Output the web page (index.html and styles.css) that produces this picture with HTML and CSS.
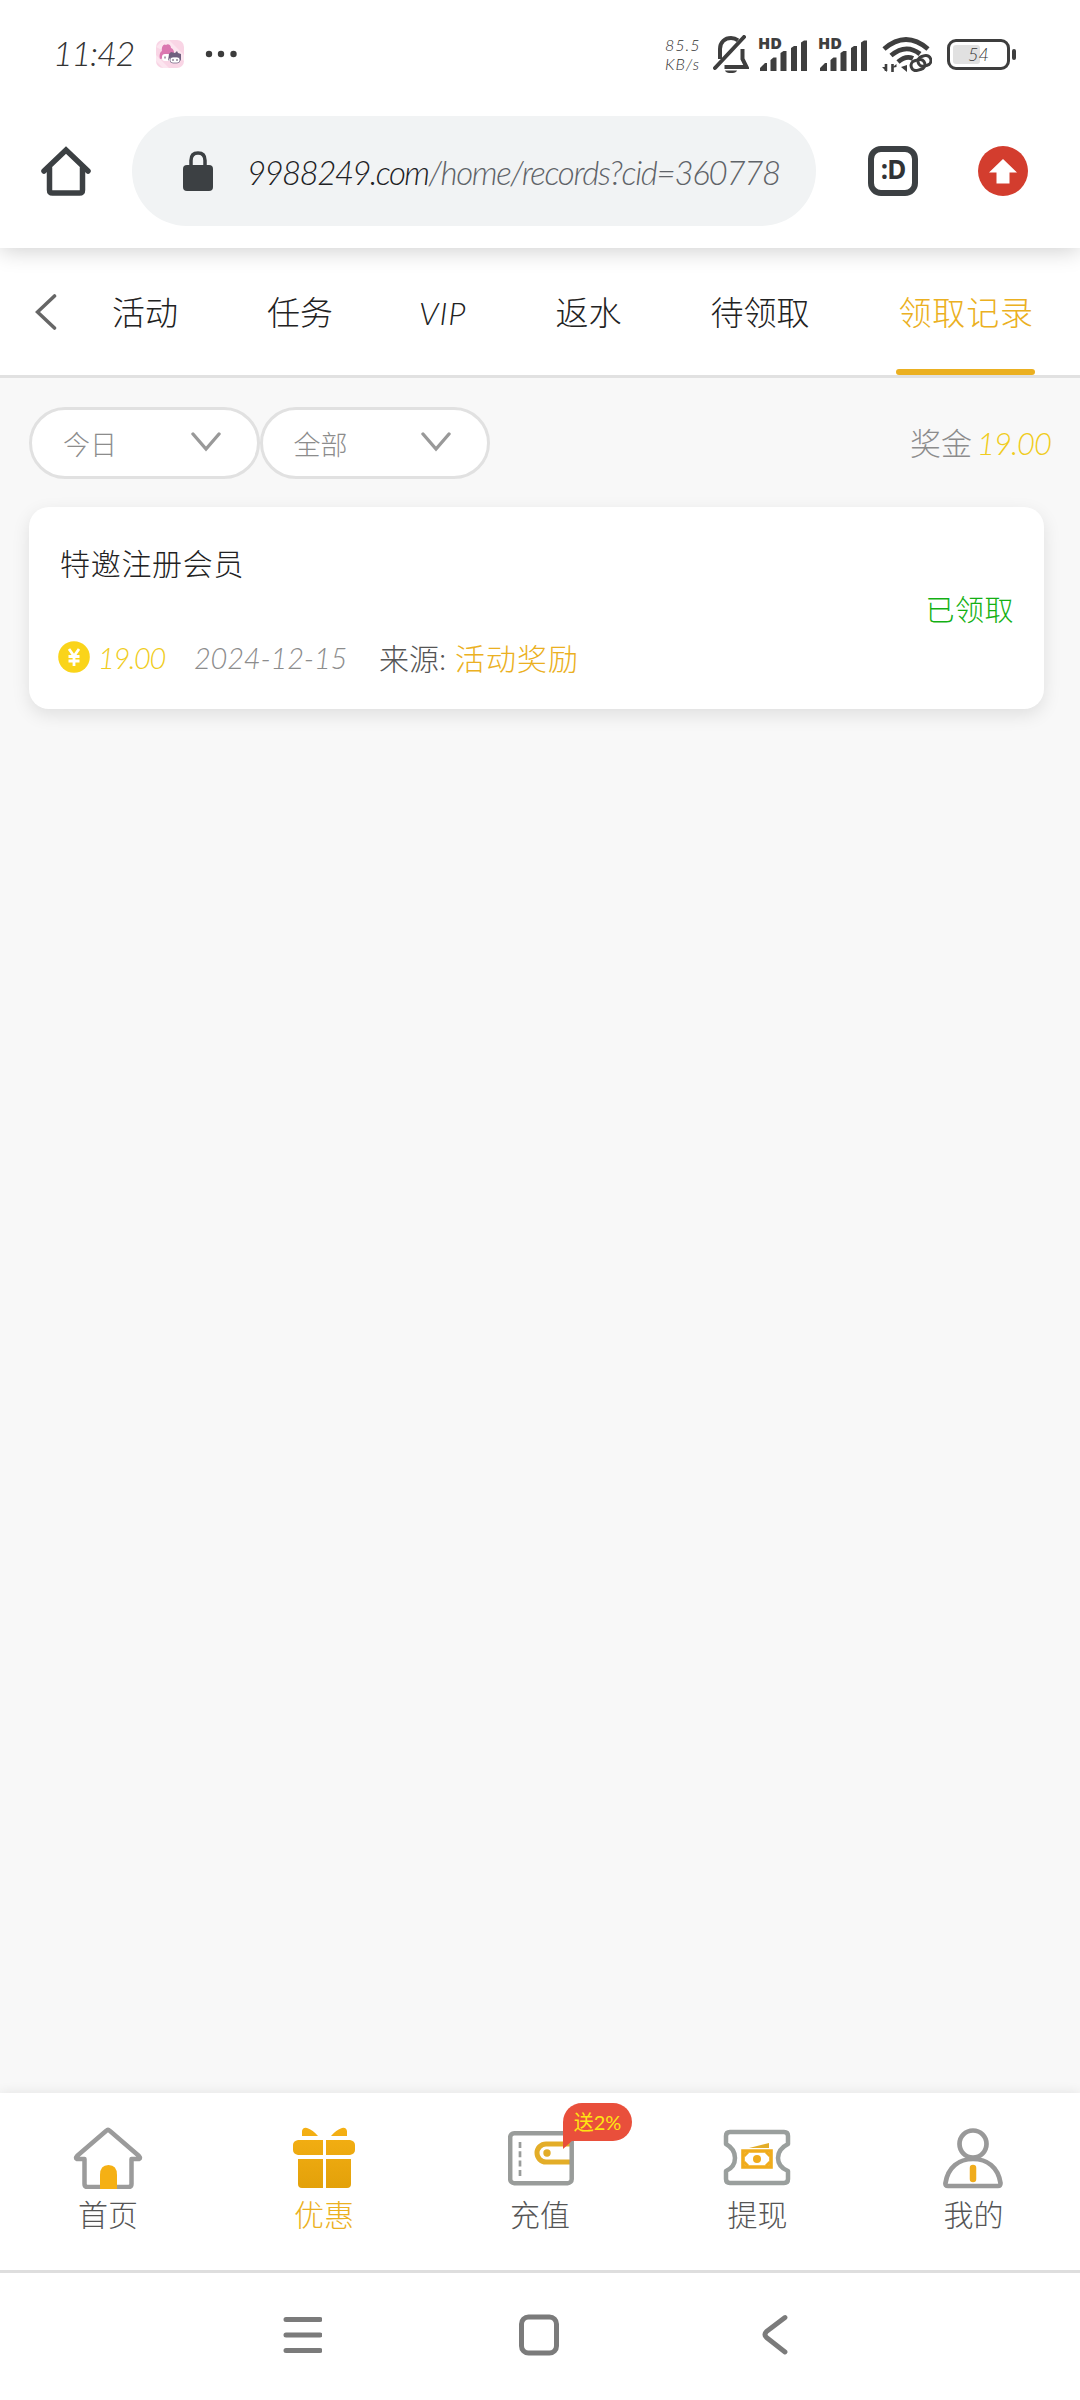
FILE: index.html
```html
<!DOCTYPE html>
<html lang="zh-CN">
<head>
<meta charset="utf-8">
<title>领取记录</title>
<link rel="stylesheet" href="styles.css">
</head>
<body>
<div class="screen">
  <header class="browser">
    <div class="status">
      <span class="time">11:42</span>
      <svg class="app-icon" width="28" height="28" viewBox="0 0 28 28">
        <rect width="28" height="28" rx="7" fill="#f9d5e5"/>
        <path d="M0 7 7 0h6L28 15v6zM0 15l13 13H7L0 21z" fill="#fce5ef"/>
        <path d="M6 11C5 7 8 3 10 5c2-2 5 0 5 3 3 1 4 5 2 8L4 19c-1-4 0-7 2-8z" fill="#db77b0"/>
        <rect x="6" y="14" width="9" height="7" rx="3" fill="#fff"/>
        <path d="M13 14l2-2 4 1 2-2 1 2 3 1v7l-2-3H14l-2 3z" fill="#70607f"/>
        <rect x="14" y="17" width="10" height="6" rx="3" fill="#fff" stroke="#70607f" stroke-width=".7"/>
        <path d="M9 16.500v2M17 19v2M21 19v2" stroke="#5a4a66"/>
      </svg>
      <svg class="more" width="32" height="8" viewBox="0 0 32 8" fill="#3c3c3c"><circle cx="4" cy="4" r="3.200"/><circle cx="16" cy="4" r="3.200"/><circle cx="28.500" cy="4" r="3.200"/></svg>
      <span class="speed"><span>85.5</span><span>KB/s</span></span>
      <svg class="bell" width="36" height="38" viewBox="0 0 36 38" fill="none" stroke="#3e3e3e" stroke-width="4">
        <path d="M7 24V14C7 7 12 3 18 3c3 0 5 .8 7 2.300M29.500 14v10l4 8H11.500"/>
        <path d="M2 33 31 2" stroke-linecap="round"/><path d="M12 35.500h12c-1 3.500-11 3.500-12 0z" fill="#3e3e3e" stroke="none"/>
      </svg>
      <span class="signal"><b>HD</b><svg width="49" height="31" viewBox="0 0 49 31" fill="#3e3e3e"><path d="M1 31v-3l5-5 2 0v8zM11.500 31V20l3-2.500h3V31zM21.500 31V13l3-2h3v20zM32 31V8l3-2h3v25zM42 31V2.500L45 .5h3V31z"/></svg></span>
      <span class="signal"><b>HD</b><svg width="49" height="31" viewBox="0 0 49 31" fill="#3e3e3e"><path d="M1 31v-3l5-5 2 0v8zM11.500 31V20l3-2.500h3V31zM21.500 31V13l3-2h3v20zM32 31V8l3-2h3v25zM42 31V2.500L45 .5h3V31z"/></svg></span>
      <svg class="wifi" width="50" height="37" viewBox="0 0 50 37" fill="none" stroke="#3e3e3e">
        <path d="M2 13Q24-6 46 13M9 19.500Q24 7 38 18M16 26q8-7 15-3.500" stroke-width="4.800"/>
        <path d="M4 28v7M10.500 28v8" stroke-width="2.600"/><path d="M0 31h5v5zM9.500 32l5-4v3z" fill="#3e3e3e" stroke="none"/>
        <path d="M19 31l6-2v7z" fill="#3e3e3e" stroke="none"/>
        <g stroke-width="3"><rect x="29" y="24" width="14" height="10" rx="5" transform="rotate(-15 36 29)"/><rect x="36" y="20" width="13" height="10" rx="5" transform="rotate(-15 42 25)"/></g>
      </svg>
      <span class="battery"><span class="charge"></span><span class="level">54</span></span>
      <span class="battery-tip"></span>
    </div>
    <div class="toolbar">
      <svg class="home" width="50" height="50" viewBox="0 0 50 50" fill="none" stroke="#3c4043" stroke-width="5.500" stroke-linejoin="round" stroke-linecap="round"><path d="M3 25 25 4l22 21" stroke-linejoin="miter"/><path d="M8.500 22v22q0 3 3 3h27q3 0 3-3V22" stroke-linejoin="round"/></svg>
      <div class="address">
        <svg width="30" height="40" viewBox="0 0 30 40"><rect y="14" width="30" height="26" rx="4" fill="#3c4043"/><path d="M8 15V9.500Q8 2 15 2t7 7.500V15" fill="none" stroke="#3c4043" stroke-width="3.500"/></svg>
        <span class="url"><span class="host">9988249.com</span>/home/records?cid=360778</span>
      </div>
      <span class="tab-count">:D</span>
      <svg class="update" width="50" height="50" viewBox="0 0 50 50"><circle cx="25" cy="25" r="25" fill="#d33d2e"/><path d="M25 13 39 26.500H31.500V37.500H18.500V26.500H11z" fill="#fff"/></svg>
    </div>
  </header>

  <nav class="tabs">
    <svg class="back" width="22" height="36" viewBox="0 0 22 36"><path d="M19.500 2 2.500 18l17 16" fill="none" stroke="#666" stroke-width="3.600" stroke-linecap="round"/></svg>
    <span class="tab">活动</span><span class="tab">任务</span><span class="tab vip">VIP</span><span class="tab">返水</span><span class="tab">待领取</span><span class="tab active">领取记录</span>
  </nav>

  <main class="content">
    <div class="filters">
      <span class="select">今日<svg width="30" height="20" viewBox="0 0 30 20"><path d="M2 2l13 15L28 2" fill="none" stroke="#999" stroke-width="3.400" stroke-linecap="round"/></svg></span>
      <span class="select">全部<svg width="30" height="20" viewBox="0 0 30 20"><path d="M2 2l13 15L28 2" fill="none" stroke="#999" stroke-width="3.400" stroke-linecap="round"/></svg></span>
      <span class="total">奖金<span class="amount">19.00</span></span>
    </div>
    <article class="record">
      <div class="info">
        <div class="title">特邀注册会员</div>
        <div class="details">
          <svg width="32" height="32" viewBox="0 0 32 32"><circle cx="16" cy="16" r="15.800" fill="#fad41a"/><path d="M11 8l5 7 5-7M16 15v10M10.500 15.500h11M10.500 20h11" fill="none" stroke="#fff" stroke-width="2.800"/></svg>
          <span class="amount">19.00</span>
          <span class="date">2024-12-15</span>
          <span class="source">来源:</span>
          <span class="kind">活动奖励</span>
        </div>
      </div>
      <span class="state">已领取</span>
    </article>
  </main>

  <nav class="bottom">
    <a class="item">
      <svg width="70" height="62" viewBox="0 0 70 62"><path d="M11.500 32H4Q2 31 4 29L33 4q2-2 4 0l29 25q2 2 0 3h-7.500v25q0 3-3 3h-41q-3 0-3-3z" fill="none" stroke="#9b9b9b" stroke-width="4.500" stroke-linejoin="round"/><path d="M27 62V48q0-10 8.500-10T44 48v14z" fill="#f5b014"/></svg>
      <span>首页</span>
    </a>
    <a class="item current">
      <svg width="64" height="62" viewBox="0 0 64 62"><defs><linearGradient id="gift" x2="0" y2="1"><stop stop-color="#f5b014"/><stop offset="1" stop-color="#e3a10a"/></linearGradient></defs><g fill="url(#gift)"><path d="M10 9V4q1-4 5-3 6 2 11 8zM55 9V4q-1-4-5-3-6 2-11 8zM6 13h25v15H6q-5-1-5-5v-5q0-4 5-5zM34 13h24q5 1 5 5v5q0 4-5 5H34zM6 32h25v29H10q-4 0-4-4zM34 32h25v25q0 4-4 4H34z"/></g></svg>
      <span>优惠</span>
    </a>
    <a class="item">
      <span class="badge">送2%</span>
      <svg width="66" height="62" viewBox="0 0 66 62" fill="none"><path d="M64 17H38a9 9 0 0 0 0 18h26" stroke="#e3ad28" stroke-width="5"/><circle cx="39" cy="26" r="3.700" fill="#e3ad28"/><rect x="2.200" y="6.200" width="61.500" height="50" rx="4" stroke="#999c9a" stroke-width="4.500"/><path d="M12 15v36" stroke="#999c9a" stroke-width="2.700" stroke-dasharray="6 3.300"/></svg>
      <span>充值</span>
    </a>
    <a class="item">
      <svg width="68" height="62" viewBox="0 0 68 62" fill="none"><path d="M7 5h54q4 0 4 4v8Q55 22 55 31t10 13v8q0 4-4 4H7q-4 0-4-4v-8q9-4 9-13T3 17V9q0-4 4-4z" stroke="#9a9f9d" stroke-width="4.500" stroke-linejoin="round"/><path d="M20 24h28v16H20z" stroke="#f0ac1c" stroke-width="3.600"/><path d="M21 29l4-4M47 29l-4-4M21 35l4 4M47 35l-4 4" stroke="#f0ac1c" stroke-width="3"/><circle cx="34" cy="32" r="4" fill="#f0ac1c"/><path d="M26 21l20-5v5z" fill="#e3ad28"/></svg>
      <span>提现</span>
    </a>
    <a class="item">
      <svg width="60" height="62" viewBox="0 0 60 62" fill="none" stroke="#999" stroke-width="4.700"><circle cx="30" cy="17" r="13.500"/><path d="M5 59q-3 0-2.500-3C5 40 16 32 30 32s25 8 27.500 24q0 3-2.500 3z"/><path d="M30 41v11" stroke="#f0ac1c" stroke-width="6.500" stroke-linecap="round"/></svg>
      <span>我的</span>
    </a>
  </nav>

  <footer class="system">
    <svg width="40" height="42" viewBox="0 0 40 42" fill="none" stroke="#7b7b7b" stroke-width="5" stroke-linecap="round"><path d="M4 5.500h34M4 21h34M4 36.500h34"/></svg>
    <svg width="42" height="42" viewBox="0 0 42 42" fill="none" stroke="#7b7b7b" stroke-width="5"><rect x="3.500" y="3" width="35" height="36" rx="7"/></svg>
    <svg width="26" height="42" viewBox="0 0 26 42" fill="none" stroke="#7b7b7b" stroke-width="4.800" stroke-linecap="round" stroke-linejoin="round"><path d="M23 3.500 4.500 17.500q-3 3 0 6L23 38"/></svg>
  </footer>
</div>
</body>
</html>
```
FILE: styles.css
```css
* { box-sizing: border-box; }
body { margin: 0; background: #f8f8f8; font-family: Lato, "Noto Sans CJK SC", sans-serif; font-weight: 300; }
svg { display: block; flex: none; }
span { white-space: nowrap; }
.screen { width: 1080px; height: 2400px; display: flex; flex-direction: column; }

.browser { height: 248px; flex: none; background: #fff; box-shadow: 0 2px 22px rgba(0, 0, 0, .2); z-index: 1; }
.status { height: 108px; display: flex; align-items: center; padding-left: 53px; color: #333; font-style: italic; }
.time { width: 103px; margin-top: -3px; font-size: 34px; letter-spacing: -1.2px; }
.app-icon { margin-right: 21px; }
.speed { margin-left: 428px; width: 48px; display: flex; flex-direction: column; font-size: 16px; line-height: 19px; letter-spacing: 1px; }
.bell { margin-right: 9px; }
.signal { width: 60px; height: 34px; display: flex; align-items: flex-end; font: 700 16px/12px "Open Sans", sans-serif; color: #3e3e3e; }
.signal b { width: 0; align-self: flex-start; }
.signal svg { margin-left: 1px; }
.wifi { margin: 0 15px 0 4px; }
.battery { position: relative; width: 63px; height: 31px; border: 3px solid #3e3e3e; border-radius: 9px; padding: 3px; }
.charge { display: block; width: 27px; height: 19px; border-radius: 3px; background: #e1e1e1; }
.level { position: absolute; inset: 0; text-align: center; font-size: 18px; line-height: 25px; }
.battery-tip { width: 4px; height: 11px; margin-left: 2px; border-radius: 2px; background: #3e3e3e; }

.toolbar { height: 126px; display: flex; align-items: center; padding-left: 41px; }
.address { width: 684px; height: 110px; margin: 0 52px 0 41px; padding: 0 0 0 51px; border-radius: 55px; background: #f1f3f4; display: flex; align-items: center; }
.url { margin: 2px 0 0 34px; font-size: 33px; font-style: italic; color: #5f6368; letter-spacing: -1.3px; }
.host { color: #202124; letter-spacing: -1.6px; }
.tab-count { width: 50px; height: 50px; margin-right: 60px; border: 6px solid #3c4043; border-radius: 13px; text-align: center; font: 700 26px/35px "Noto Sans", sans-serif; letter-spacing: -1px; color: #303336; }

.tabs { height: 130px; flex: none; display: flex; align-items: center; gap: 89px; padding-left: 35px; background: #fff; border-bottom: 3px solid #e1e1e1; font-size: 33px; color: #222; }
.back { margin: 0 -34px 0 0; }
.tab { height: 127px; line-height: 129px; }
.vip { margin-left: -3px; font-style: italic; font-size: 32px; letter-spacing: 1px; }
.active { position: relative; color: #ebb021; letter-spacing: .8px; }
.active::after { content: ""; position: absolute; left: -3px; right: -1px; bottom: 0; height: 6px; border-radius: 3px; background: #ebb021; }

.content { flex: 1; padding: 29px 36px 0 29px; }
.filters { display: flex; align-items: center; color: #8c8c8c; }
.select { width: 230.500px; height: 72px; border: 3px solid #e1e1e1; border-radius: 36px; background: #fff; display: flex; align-items: center; justify-content: space-between; padding: 0 36px 0 31px; font-size: 27px; }
.select svg { margin-bottom: 3px; }
.total { margin: -4px -7px 0 auto; font-size: 31px; }
.amount { font-style: italic; color: #f0cc20; }
.total .amount { margin-left: 5px; font-size: 31px; letter-spacing: -1px; }
.record { height: 202px; margin-top: 28px; padding: 0 30px; border-radius: 20px; background: #fff; box-shadow: 0 6px 18px rgba(0, 0, 0, .1); display: flex; align-items: center; justify-content: space-between; }
.info { height: 202px; padding-top: 35px; }
.title { padding-left: 1px; font-size: 30px; line-height: 42px; letter-spacing: .7px; color: #222; }
.details { display: flex; align-items: center; height: 42px; margin-top: 52px; font-size: 29px; white-space: nowrap; }
.details svg { margin-left: -1px; }
.details .amount { width: 74px; margin-left: 8px; letter-spacing: -1.4px; }
.date { width: 185px; margin-left: 22px; font-style: italic; letter-spacing: -.2px; color: #8c8c8c; }
.source { width: 76px; color: #555; font-size: 30px; }
.kind { font-size: 30px; letter-spacing: 1px; color: #ebb021; }
.state { font-size: 29px; letter-spacing: .5px; color: #13b013; }

.bottom { height: 180px; flex: none; display: flex; background: #fff; border-bottom: 3px solid #dedede; box-shadow: 0 0 12px rgba(0, 0, 0, .09); }
.item { position: relative; flex: 1; display: flex; flex-direction: column; align-items: center; padding-top: 34px; font-size: 30px; line-height: 42px; color: #555; }
.item > svg { margin-bottom: 4px; }
.item:nth-child(n+3) > svg { margin-left: 2px; }
.item:nth-child(n+4) > span { margin-left: 3px; }
.current { color: #ebb021; }
.badge { position: absolute; left: 131px; top: 10px; width: 69px; height: 38px; border-radius: 19px 19px 19px 0; background: #e94f3b; color: #ffe512; text-align: center; font-size: 20px; font-weight: 400; line-height: 38px; }
.badge::after { content: ""; position: absolute; left: 0; top: 37px; border-top: 9px solid #e94f3b; border-right: 10px solid transparent; }
.system { height: 127px; flex: none; display: flex; align-items: center; padding: 0 0 3px 282px; gap: 196px; background: #fff; }
.system svg:last-child { margin-left: 6px; }
```
